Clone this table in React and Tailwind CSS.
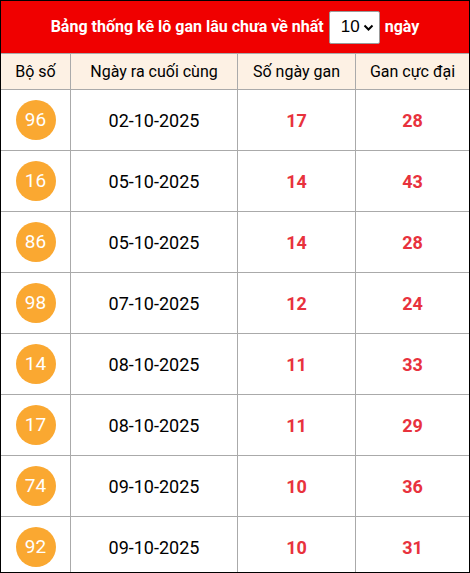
import React from 'react';

const rows = [
  { num: '96', date: '02-10-2025', gan: 17, max: 28 },
  { num: '16', date: '05-10-2025', gan: 14, max: 43 },
  { num: '86', date: '05-10-2025', gan: 14, max: 28 },
  { num: '98', date: '07-10-2025', gan: 12, max: 24 },
  { num: '14', date: '08-10-2025', gan: 11, max: 33 },
  { num: '17', date: '08-10-2025', gan: 11, max: 29 },
  { num: '74', date: '09-10-2025', gan: 10, max: 36 },
  { num: '92', date: '09-10-2025', gan: 10, max: 31 },
];

const cols = 'grid grid-cols-[70px_167px_118px_113px]';

const App = () => {
  return (
    <div className="w-[470px] h-[573px] overflow-hidden border border-black bg-white font-['Roboto',sans-serif]">
      {/* Title bar */}
      <div className="h-[53px] bg-[#f00000] flex items-center justify-center gap-[5px] border-b border-[#aaa]">
        <span className="text-white font-bold text-[16px]">Bảng thống kê lô gan lâu chưa về nhất</span>
        <div className="relative w-[51px] h-[33px] bg-white border border-[#999] rounded-[2px] flex items-center pl-[11px]">
          <span className="text-[17px] text-black font-['Liberation_Sans',sans-serif]">10</span>
          <svg className="absolute right-[5px] top-[12px]" width="11" height="8" viewBox="0 0 11 8">
            <path d="M1.5 1.5 L5.5 5.5 L9.5 1.5" fill="none" stroke="#000" strokeWidth="2" />
          </svg>
        </div>
        <span className="text-white font-bold text-[16px]">ngày</span>
      </div>

      {/* Column headers */}
      <div className={`${cols} h-[36px] bg-[#fdf1e4] border-b border-[#aaa] text-[16px] text-black`}>
        <div className="flex items-center justify-center border-r border-[#aaa]">Bộ số</div>
        <div className="flex items-center justify-center border-r border-[#aaa]">Ngày ra cuối cùng</div>
        <div className="flex items-center justify-center border-r border-[#aaa]">Số ngày gan</div>
        <div className="flex items-center justify-center">Gan cực đại</div>
      </div>

      {/* Rows */}
      {rows.map((r) => (
        <div key={r.num + r.date} className={`${cols} h-[61px] border-b border-[#aaa]`}>
          <div className="flex items-center justify-center border-r border-[#aaa]">
            <span className="w-10 h-10 rounded-full bg-[#faa831] text-white text-[19px] flex items-center justify-center">
              {r.num}
            </span>
          </div>
          <div className="flex items-center justify-center border-r border-[#aaa] text-[18px] text-black">
            {r.date}
          </div>
          <div className="flex items-center justify-center border-r border-[#aaa] text-[18px] font-bold text-[#e8323d]">
            {r.gan}
          </div>
          <div className="flex items-center justify-center text-[18px] font-bold text-[#e8323d]">
            {r.max}
          </div>
        </div>
      ))}
    </div>
  );
};

export default App;
